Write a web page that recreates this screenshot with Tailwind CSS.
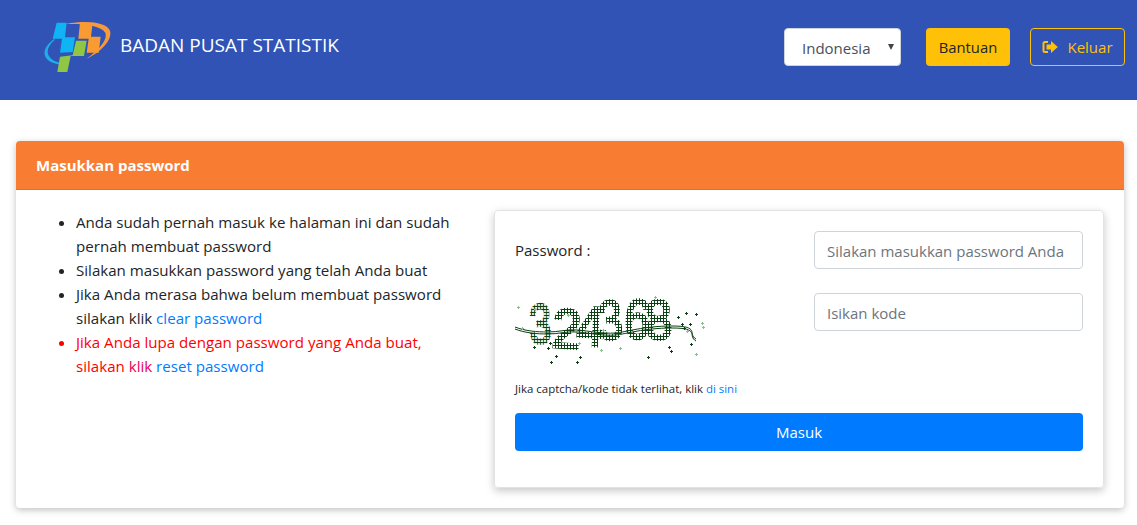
<!DOCTYPE html>
<html lang="en">
  <head>
    <meta charset="UTF-8" />
    <title>Badan Pusat Statistik - Masukkan password</title>
    <script src="https://cdn.jsdelivr.net/npm/@tailwindcss/browser@4"></script>
  </head>
  <body class="bg-white text-[#212529] font-['Open_Sans',sans-serif] text-[15.100px] min-h-screen">

    <!-- Navbar -->
    <header class="h-[100px] bg-[#3053b5] flex items-start justify-between pl-[30px] pr-[12px]">
      <div class="flex items-center mt-[10px]">
        <svg width="90" height="70" viewBox="0 0 270 210">
          <path d="M108 42 C170 30 228 36 240 62 C248 90 212 126 170 146 C202 122 234 92 226 68 C212 46 160 40 108 42Z" fill="#f7983a" />
          <path d="M74 86 C50 102 38 122 46 140 C54 156 76 162 96 164 L96 160 C76 156 60 148 54 132 C50 116 62 100 74 90Z" fill="#1eaee8" />
          <polygon points="80,38 110,38 105,82 135,82 128,126 90,128 96,86 68,86" fill="#10b4f4" />
          <polygon points="150,38 188,38 183,80 212,80 206,128 170,128 176,86 145,86" fill="#f99b33" />
          <polygon points="138,92 170,92 162,138 122,138 112,186 82,186 90,140 128,136" fill="#8fc744" />
        </svg>
        <span class="text-white text-[19px] leading-[28px]">BADAN PUSAT STATISTIK</span>
      </div>
      <div class="flex items-center mt-[28px]">
        <div class="relative w-[117px] h-[38px]">
          <select class="appearance-none w-full h-full bg-white rounded-[4px] border border-[#ced4da] pl-[17px] pt-[2px] text-[#495057] text-[15px]">
            <option>Indonesia</option>
          </select>
          <span class="absolute right-[7px] top-[16px] w-0 h-0 border-x-[3.5px] border-x-transparent border-t-[6px] border-t-[#444]"></span>
        </div>
        <button class="ml-[25px] w-[84px] h-[38px] rounded-[4px] bg-[#ffc107] text-[#212529] text-[14.800px]">Bantuan</button>
        <button class="ml-[20px] w-[95px] h-[38px] rounded-[4px] border border-[#ffc107] text-[#ffc107] text-[15px] flex items-center justify-center">
          <svg width="16" height="14" viewBox="0 0 16 14" class="mr-[9px]">
            <path d="M6 1H3a2.500 2.500 0 0 0-2.500 2.500v7A2.500 2.500 0 0 0 3 13h3v-2H3a.5.5 0 0 1-.5-.5v-7A.5.5 0 0 1 3 3h3z" fill="#ffc107" />
            <path d="M9 1 15.800 7 9 13V9.600H4.500V4.400H9z" fill="#ffc107" />
          </svg>
          Keluar
        </button>
      </div>
    </header>

    <!-- Main Content -->
    <main class="pt-[41px] px-[16px] pr-[13px]">
      <div class="h-[367px] rounded-[4px] bg-white shadow-[0_2px_7px_rgba(0,0,0,0.25)] overflow-hidden">
        <div class="h-[49px] bg-[#f87c31] border-b border-[#e0702b] flex items-center pl-[20px] text-white font-bold text-[15px]">Masukkan password</div>
        <div class="flex pt-[20px] pl-[20px]">

          <ul class="w-[458px] list-disc pl-[40px] pr-[39px] leading-[24px] marker:text-[#212529]">
            <li>Anda sudah pernah masuk ke halaman ini dan sudah pernah membuat password</li>
            <li>Silakan masukkan password yang telah Anda buat</li>
            <li>Jika Anda merasa bahwa belum membuat password silakan klik <a href="#" class="text-[#007bff]">clear password</a></li>
            <li class="text-[#ff0000] marker:text-[#ff0000]">Jika Anda lupa dengan password yang Anda buat, silakan <span class="text-[#e6005c]">klik</span> <a href="#" class="text-[#007bff]">reset password</a></li>
          </ul>

          <div class="w-[610px] h-[278px] rounded-[4px] border border-[#e3e3e3] shadow-[0_3px_8px_rgba(0,0,0,0.22)] px-[20px] pt-[20px]">
            <div class="flex justify-between items-center h-[38px]">
              <label for="password" class="text-[#212529] text-[15px]">Password :</label>
              <input id="password" type="password" placeholder="Silakan masukkan password Anda" class="w-[269px] h-[38px] rounded-[4px] border border-[#ced4da] px-[12px] pt-[2px] text-[15px] placeholder:text-[#6c757d]" />
            </div>
            <div class="flex justify-between items-start mt-[24px] h-[76px]">
              <svg width="190" height="72" viewBox="0 0 190 72">
                <defs>
                  <pattern id="dots" width="3" height="3" patternUnits="userSpaceOnUse">
                    <path d="M1 0h1v1h1v1H2v1H1V2H0V1h1z" fill="#0b4012" />
                  </pattern>
                  <path id="dark" d="M1 0h1v1h1v1H2v1H1V2H0V1h1z" fill="#0b4012" />
                  <path id="light" d="M1 0h1v1h1v1H2v1H1V2H0V1h1z" fill="#86c48e" />
                </defs>
                <g fill="url(#dots)" stroke="url(#dots)" stroke-width="2.500" font-family="Liberation Sans, sans-serif" font-size="56">
                  <text x="15" y="51" rotate="-3" textLength="22" lengthAdjust="spacingAndGlyphs">3</text>
                  <text x="36" y="54" rotate="4" textLength="29" lengthAdjust="spacingAndGlyphs">2</text>
                  <text x="61" y="52" rotate="3" textLength="27" lengthAdjust="spacingAndGlyphs">4</text>
                  <text x="85" y="48" rotate="-6" textLength="24" lengthAdjust="spacingAndGlyphs">3</text>
                  <text x="108" y="44" rotate="5" textLength="26" lengthAdjust="spacingAndGlyphs">6</text>
                  <text x="131" y="47" rotate="-3" textLength="27" lengthAdjust="spacingAndGlyphs">8</text>
                </g>
                <path d="M0 34 C10 38 22 39 33 39 S52 36 63 37 S88 41 100 40 S128 33 157 33 S172 41 181 46" fill="none" stroke="#0b4012" stroke-width="1" />
                <path d="M0 36 C10 40 22 41 33 41 S52 38 63 39 S88 43 100 42 S128 35 157 35 S172 43 181 48" fill="none" stroke="#0b4012" stroke-width="1" />
                <use href="#dark" x="18" y="53" /><use href="#dark" x="34" y="49" /><use href="#dark" x="32" y="54" />
                <use href="#dark" x="40" y="62" /><use href="#dark" x="35" y="68" /><use href="#dark" x="61" y="68" />
                <use href="#dark" x="64" y="63" /><use href="#dark" x="132" y="63" /><use href="#dark" x="153" y="53" />
                <use href="#dark" x="155" y="57" /><use href="#dark" x="162" y="23" /><use href="#dark" x="170" y="19" />
                <use href="#dark" x="180" y="20" /><use href="#dark" x="166" y="30" /><use href="#dark" x="174" y="30" />
                <use href="#dark" x="168" y="34" /><use href="#dark" x="175" y="50" />
                <use href="#light" x="2" y="13" /><use href="#light" x="6" y="34" /><use href="#light" x="19" y="15" />
                <use href="#light" x="63" y="49" /><use href="#light" x="85" y="56" /><use href="#light" x="104" y="54" />
                <use href="#light" x="139" y="3" /><use href="#light" x="186" y="29" /><use href="#light" x="187" y="33" />
                <use href="#light" x="180" y="60" /><use href="#light" x="171" y="37" /><use href="#light" x="87" y="36" />
                <use href="#light" x="52" y="21" />
              </svg>
              <input type="text" placeholder="Isikan kode" class="w-[269px] h-[38px] rounded-[4px] border border-[#ced4da] px-[12px] pt-[2px] text-[15px] placeholder:text-[#6c757d]" />
            </div>
            <p class="mt-[12px] text-[11.450px] leading-[16px]">Jika captcha/kode tidak terlihat, klik <a href="#" class="text-[#007bff]">di sini</a></p>
            <button class="mt-[16px] w-full h-[38px] rounded-[4px] bg-[#007bff] text-white text-[15px]">Masuk</button>
          </div>
        </div>
      </div>
    </main>

  </body>
</html>
